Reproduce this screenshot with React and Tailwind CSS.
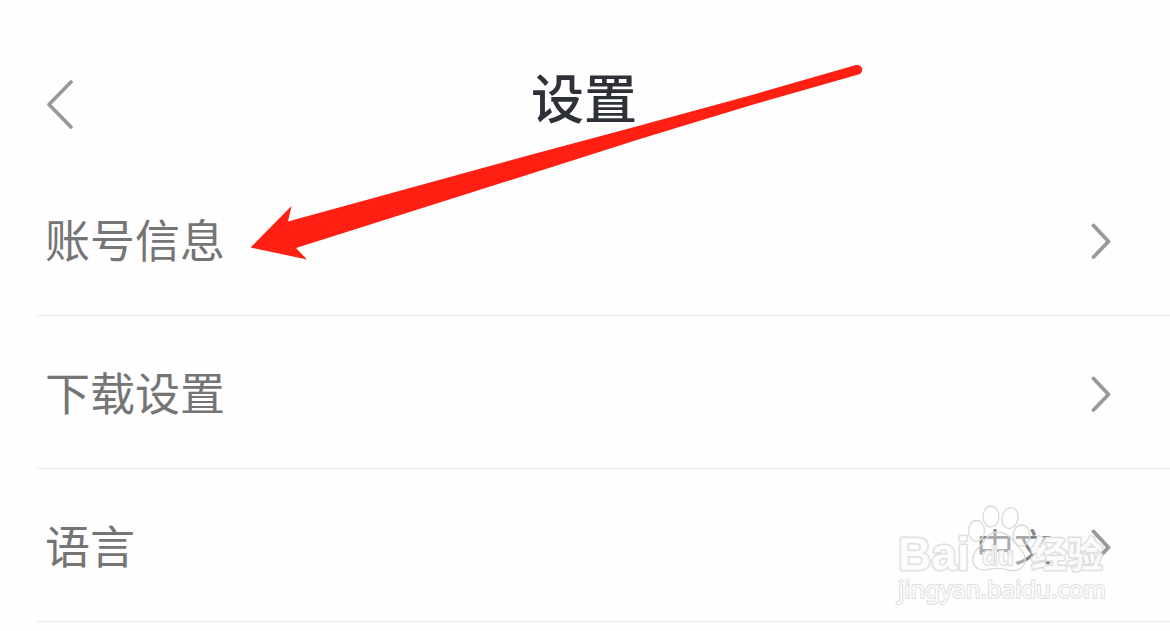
import React from "react";

const rows = [
  { id: "account", label: "账号信息" },
  { id: "download", label: "下载设置" },
  { id: "language", label: "语言", value: "中文" },
];

const BackIcon = () => (
  <svg className="w-7 h-13" viewBox="0 0 28 52" fill="none" aria-hidden="true">
    <path d="M25 5 3 27.500 25 50" stroke="#96989d" strokeWidth="3.6" strokeLinecap="round" strokeLinejoin="round" />
  </svg>
);

const ChevronIcon = () => (
  <svg className="w-6 h-10 shrink-0" viewBox="0 0 24 40" fill="none" aria-hidden="true">
    <path d="M5.500 6.500 20.500 22.500 5.500 38" stroke="#98999b" strokeWidth="3.8" strokeLinecap="round" strokeLinejoin="round" />
  </svg>
);

const SettingRow = ({ label, value }) => (
  <li className="border-b border-[#ebebeb]">
    <button type="button" className="flex w-full items-center justify-between pl-[9px] pr-[58px] py-11 text-left">
      <span className="text-[45px] leading-16 text-[#757575]">{label}</span>
      <span className="flex items-center gap-9">
        {value && <span className="text-[38px] leading-16 text-[#85868a]">{value}</span>}
        <ChevronIcon />
      </span>
    </button>
  </li>
);

// red pointer drawn over the first row
const Arrow = () => (
  <svg className="absolute left-[250px] top-[60px] w-[620px] h-[204px] pointer-events-none" viewBox="250 60 620 204" aria-hidden="true">
    <path
      d="M250.500 247.500 291.500 206 288 221.500 530 155 640 125.500 750 95.500 856 65C863 64 864.500 72.500 858.500 74.500L750 105.500 640 139 530 174 296 248 307 259.500Z"
      fill="#ff2013"
    />
  </svg>
);

const Watermark = () => (
  <svg
    className="absolute right-[60px] bottom-[17px] w-[220px] h-[108px] pointer-events-none"
    viewBox="890 498 220 108"
    aria-hidden="true"
  >
    <g fill="#fff" fillOpacity="0.3" stroke="#dadada" strokeWidth="1.3">
      <ellipse cx="976.500" cy="532" rx="8" ry="10.500" />
      <ellipse cx="991" cy="517.500" rx="8" ry="10.500" />
      <ellipse cx="1010" cy="519" rx="8" ry="10.500" transform="rotate(12 1010 519)" />
      <ellipse cx="1021.500" cy="536.500" rx="8.500" ry="10.500" />
      <path d="M998 533C990 533 985 540 981 546 975 552 972 556 973 563 975 571 983 572 990 570 996 569 1002 569 1008 571 1016 573 1024 570 1025 562 1026 554 1020 550 1016 545 1011 538 1006 533 998 533Z" />
    </g>
    <g fill="#fff" fillOpacity="0.85" stroke="#e0e0e0" strokeLinejoin="round" fontWeight="700" style={{ paintOrder: "stroke" }}>
      <text x="898" y="571" fontSize="46" strokeWidth="3" fontFamily="Liberation Sans, Arial, sans-serif">Bai</text>
      <text x="982" y="566" fontSize="26" strokeWidth="2" fillOpacity="0.6" fontFamily="Liberation Sans, Arial, sans-serif">du</text>
      <text x="1031" y="569" fontSize="36" strokeWidth="3" fontFamily="Noto Sans CJK SC, sans-serif">经验</text>
      <text x="898" y="599" fontSize="24" strokeWidth="2" fontWeight="400" fontFamily="Noto Sans, sans-serif">jingyan.baidu.com</text>
    </g>
  </svg>
);

export default function App() {
  return (
    <div className="min-h-screen bg-[#fefefe] font-['Noto_Sans_CJK_SC',sans-serif]">
      <main className="relative">
        <header className="grid grid-cols-[1fr_auto_1fr] items-start pl-[46px] pr-[48px] pt-[57px] pb-7">
          <button type="button" aria-label="返回" className="justify-self-start pt-5">
            <BackIcon />
          </button>
          <h1 className="text-[53px] leading-[78px] font-medium text-[#2f3138]">设置</h1>
        </header>

        <ul className="pl-9">
          {rows.map((row) => (
            <SettingRow key={row.id} label={row.label} value={row.value} />
          ))}
        </ul>

        <Arrow />
        <Watermark />
      </main>
    </div>
  );
}
